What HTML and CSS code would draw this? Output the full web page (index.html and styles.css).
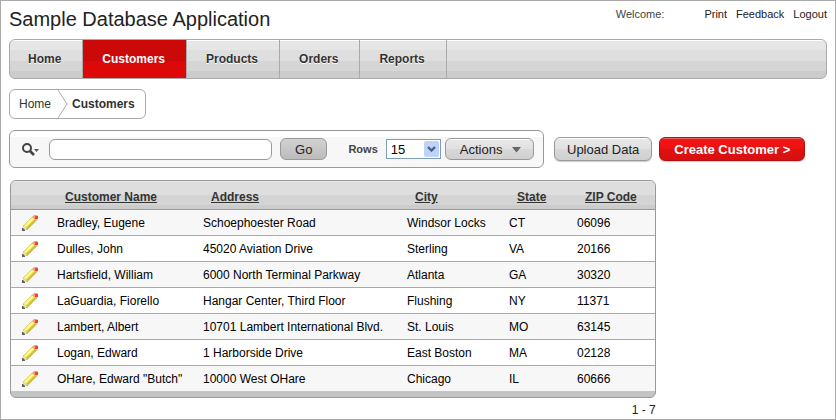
FILE: index.html
```html
<!DOCTYPE html>
<html lang="en">
<head>
    <meta charset="UTF-8">
    <meta name="viewport" content="width=device-width, initial-scale=1.0">
    <title>Customers</title>
    <link rel="stylesheet" href="styles.css">
</head>
<body>
    <svg class="sprite" aria-hidden="true">
        <symbol id="pencil" viewBox="0 0 16 16">
            <path d="M1 11 L10 2 L15 5 L5 15 L1 15 Z" fill="#a89638"/>
            <path d="M1 11 L10 2 L14 5 L5 14 Z" fill="#f0e440"/>
            <path d="M2 11 L10 3 L12 4 L4 12 Z" fill="#fdf9a0"/>
            <path d="M4 13 L13 4 L14 5 L5 14 Z" fill="#d6c02a"/>
            <path d="M1 12 L2 11 L5 14 L4 15 L1 15 Z" fill="#f0dca8"/>
            <path d="M0 13 L1 13 L3 15 L3 16 L0 16 Z" fill="#5c6068"/>
            <path d="M10 2 L12 0 L15 0 L16 1 L16 4 L14 5 Z" fill="#f0a08c"/>
            <path d="M13 1 H16 V4 H13 Z" fill="#f04818"/>
        </symbol>
    </svg>

    <header class="header">
        <h1 class="title">Sample Database Application</h1>
        <div class="user-links">
            <span class="welcome">Welcome:</span>
            <a href="#">Print</a>
            <a href="#">Feedback</a>
            <a href="#">Logout</a>
        </div>
    </header>

    <nav class="tabs">
        <a href="#">Home</a>
        <a href="#" class="current">Customers</a>
        <a href="#">Products</a>
        <a href="#">Orders</a>
        <a href="#">Reports</a>
    </nav>

    <nav class="breadcrumb">
        <a href="#">Home</a>
        <svg width="11" height="28" viewBox="0 0 11 28" aria-hidden="true">
            <path d="M1 0 L10 14 L1 28" fill="none" stroke="#aaa"/>
        </svg>
        <strong>Customers</strong>
    </nav>

    <div class="toolbar">
        <form class="search-bar">
            <button type="button" class="search-menu" aria-label="Select columns to search">
                <svg width="18" height="13" viewBox="0 0 18 13" aria-hidden="true">
                    <circle cx="5" cy="5" r="4" fill="none" stroke="#444" stroke-width="2"/>
                    <path d="M8 8 L12 12" stroke="#444" stroke-width="2.6"/>
                    <path d="M12 6 H17 L14.5 9 Z" fill="#555"/>
                </svg>
            </button>
            <input type="text" class="search-field" aria-label="Search">
            <button type="button" class="button go">Go</button>
            <label class="rows-label" for="rows">Rows</label>
            <div class="select">
                <select id="rows">
                    <option>5</option>
                    <option>10</option>
                    <option selected>15</option>
                    <option>20</option>
                </select>
                <svg class="select-arrow" width="15" height="16" viewBox="0 0 15 16" aria-hidden="true">
                    <rect width="15" height="16" rx="2" fill="#bfd2fb"/>
                    <path d="M4 6 L7.5 9.5 L11 6" fill="none" stroke="#4d6185" stroke-width="2.4"/>
                </svg>
            </div>
            <button type="button" class="button actions">Actions
                <svg width="9" height="6" viewBox="0 0 9 6" aria-hidden="true">
                    <path d="M0 0 H9 L4.5 5.5 Z" fill="#666"/>
                </svg>
            </button>
        </form>
        <button type="button" class="button large">Upload Data</button>
        <button type="button" class="button large create">Create Customer &gt;</button>
    </div>

    <div class="report">
        <div class="report-box">
            <table>
                <thead>
                    <tr>
                        <th class="col-edit"></th>
                        <th class="col-name"><a href="#">Customer Name</a></th>
                        <th class="col-address"><a href="#">Address</a></th>
                        <th class="col-city"><a href="#">City</a></th>
                        <th class="col-state"><a href="#">State</a></th>
                        <th><a href="#">ZIP Code</a></th>
                    </tr>
                </thead>
                <tbody>
                    <tr>
                        <td><a href="#" aria-label="Edit"><svg class="pencil"><use href="#pencil"/></svg></a></td>
                        <td>Bradley, Eugene</td>
                        <td>Schoephoester Road</td>
                        <td>Windsor Locks</td>
                        <td>CT</td>
                        <td>06096</td>
                    </tr>
                    <tr>
                        <td><a href="#" aria-label="Edit"><svg class="pencil"><use href="#pencil"/></svg></a></td>
                        <td>Dulles, John</td>
                        <td>45020 Aviation Drive</td>
                        <td>Sterling</td>
                        <td>VA</td>
                        <td>20166</td>
                    </tr>
                    <tr>
                        <td><a href="#" aria-label="Edit"><svg class="pencil"><use href="#pencil"/></svg></a></td>
                        <td>Hartsfield, William</td>
                        <td>6000 North Terminal Parkway</td>
                        <td>Atlanta</td>
                        <td>GA</td>
                        <td>30320</td>
                    </tr>
                    <tr>
                        <td><a href="#" aria-label="Edit"><svg class="pencil"><use href="#pencil"/></svg></a></td>
                        <td>LaGuardia, Fiorello</td>
                        <td>Hangar Center, Third Floor</td>
                        <td>Flushing</td>
                        <td>NY</td>
                        <td>11371</td>
                    </tr>
                    <tr>
                        <td><a href="#" aria-label="Edit"><svg class="pencil"><use href="#pencil"/></svg></a></td>
                        <td>Lambert, Albert</td>
                        <td>10701 Lambert International Blvd.</td>
                        <td>St. Louis</td>
                        <td>MO</td>
                        <td>63145</td>
                    </tr>
                    <tr>
                        <td><a href="#" aria-label="Edit"><svg class="pencil"><use href="#pencil"/></svg></a></td>
                        <td>Logan, Edward</td>
                        <td>1 Harborside Drive</td>
                        <td>East Boston</td>
                        <td>MA</td>
                        <td>02128</td>
                    </tr>
                    <tr>
                        <td><a href="#" aria-label="Edit"><svg class="pencil"><use href="#pencil"/></svg></a></td>
                        <td>OHare, Edward "Butch"</td>
                        <td>10000 West OHare</td>
                        <td>Chicago</td>
                        <td>IL</td>
                        <td>60666</td>
                    </tr>
                </tbody>
            </table>
        </div>
        <div class="pagination">1 - 7</div>
    </div>
</body>
</html>
```

FILE: styles.css
```css
* {
    box-sizing: border-box;
}
body {
    margin: 0;
    min-height: 100vh;
    padding: 0 8px;
    border: 1px solid #aaa;
    background-color: #fff;
    font-family: "Liberation Sans", Arial, sans-serif;
    font-size: 12px;
    color: #000;
}
a {
    color: inherit;
    text-decoration: none;
}
button,
input,
select {
    margin: 0;
    font-family: inherit;
}
.sprite {
    display: none;
}

/* Header */
.header {
    display: flex;
    justify-content: space-between;
    height: 38px;
}
.title {
    margin: 0;
    padding-top: 7px;
    font-size: 20px;
    line-height: 23px;
    font-weight: normal;
    color: #222;
}
.user-links {
    display: flex;
    gap: 9px;
    padding-top: 6px;
    font-size: 11px;
    line-height: 14px;
    color: #222;
}
.welcome {
    margin-right: 31px;
    color: #444;
}

/* Tabs */
.tabs {
    display: flex;
    height: 40px;
    border: 1px solid #aaa;
    border-radius: 6px;
    background: linear-gradient(#fff 1px, #e6e6e6 1px, #e6e6e6 10px, #dedede 10px, #dedede 21px, #d5d5d5 21px, #d5d5d5 31px, #ccc 31px);
    overflow: hidden;
}
.tabs a {
    padding: 0 21px 0 19px;
    border-right: 1px solid #aaa;
    line-height: 38px;
    font-weight: bold;
    color: #333;
    text-shadow: 0 1px 0 #fff;
}
.tabs a:first-child {
    padding-left: 18px;
}
.tabs .current {
    background: linear-gradient(#cb0909 21px, #dd0909 21px);
    color: #fff;
    text-shadow: none;
}

/* Breadcrumb */
.breadcrumb {
    display: flex;
    align-items: center;
    width: fit-content;
    height: 30px;
    margin: 10px 0 11px;
    padding: 0 10px 0 9px;
    border: 1px solid #aaa;
    border-radius: 6px;
    color: #333;
}
.breadcrumb svg {
    margin: 0 4px 0 6px;
}

/* Toolbar */
.toolbar {
    display: flex;
    align-items: center;
    gap: 7px;
    margin-bottom: 12px;
}
.search-bar {
    display: flex;
    align-items: center;
    flex: 0 1 535px;
    height: 38px;
    margin-right: 3px;
    padding: 0 9px 0 12px;
    border: 1px solid #999;
    border-radius: 6px;
    background: linear-gradient(#fff 6px, #f7f7f7 6px);
}
.search-menu {
    display: flex;
    padding: 0;
    border: 0;
    background: none;
}
.search-field {
    flex: 1;
    min-width: 0;
    height: 21px;
    margin: 0 8px 0 9px;
    padding: 0 6px;
    border: 1px solid #999;
    border-radius: 6px;
    background-color: #fff;
    font-size: 13px;
}
.button {
    height: 22px;
    padding: 0 14px;
    border: 1px solid #999;
    border-radius: 6px;
    background: linear-gradient(#fff 1px, #e8e8e8 1px, #e0e0e0 50%, #d8d8d8 50%, #d0d0d0);
    font-size: 13px;
    white-space: nowrap;
    color: #222;
}
.go {
    background: linear-gradient(#d2d2d2, #bbb);
}
.rows-label {
    margin: 0 8px 0 21px;
    font-size: 11px;
    font-weight: bold;
    color: #444;
}
.select {
    position: relative;
    margin-right: 4px;
}
.select select {
    display: block;
    width: 55px;
    height: 20px;
    padding: 0 4px;
    border: 1px solid #7f9db9;
    border-radius: 0;
    background-color: #fff;
    font-size: 13px;
    color: #000;
    appearance: none;
}
.select-arrow {
    position: absolute;
    top: 2px;
    right: 2px;
    pointer-events: none;
}
.actions svg {
    margin: 0 -2px 1px 6px;
}
.large {
    height: 24px;
    padding: 0 12px;
    box-shadow: 0 1px 1px #ccc;
}
.create {
    padding: 0 14px;
    border-color: #b01010;
    background: linear-gradient(#e66 1px, #f31515 1px, #ec1212 50%, #e01010 50%, #d81010);
    font-weight: bold;
    color: #fff;
}

/* Report */
.report {
    width: fit-content;
    margin-left: 1px;
}
.report-box {
    padding-bottom: 6px;
    border: 1px solid #999;
    border-radius: 6px;
    background-color: #c4c4c4;
    overflow: hidden;
}
table {
    border-collapse: collapse;
}
th,
td {
    text-align: left;
    white-space: nowrap;
}
thead tr {
    background: linear-gradient(#e9e9e9 1px, #dedede 1px, #dedede 14px, #d4d4d4 14px, #d4d4d4 24px, #ccc 24px);
}
th {
    height: 28px;
    padding: 4px 18px 0 16px;
    border-bottom: 1px solid #999;
    color: #333;
}
th a {
    text-decoration: underline;
}
td {
    height: 26px;
    padding: 2px 8px 0;
    border-bottom: 1px solid #aaa;
}
td:first-child {
    padding: 1px 11px 0;
}
tbody tr {
    background-color: #fff;
}
tbody tr:nth-child(odd) {
    background-color: #f7f7f7;
}
tbody tr:last-child td {
    border-bottom: 0;
}
.col-edit {
    width: 38px;
    padding: 0;
}
.col-name {
    width: 146px;
}
.col-address {
    width: 204px;
}
.col-city {
    width: 102px;
}
.col-state {
    width: 68px;
}
.pencil {
    display: block;
    width: 16px;
    height: 16px;
}
.pagination {
    padding-top: 5px;
    line-height: 14px;
    text-align: right;
    color: #222;
}
```
